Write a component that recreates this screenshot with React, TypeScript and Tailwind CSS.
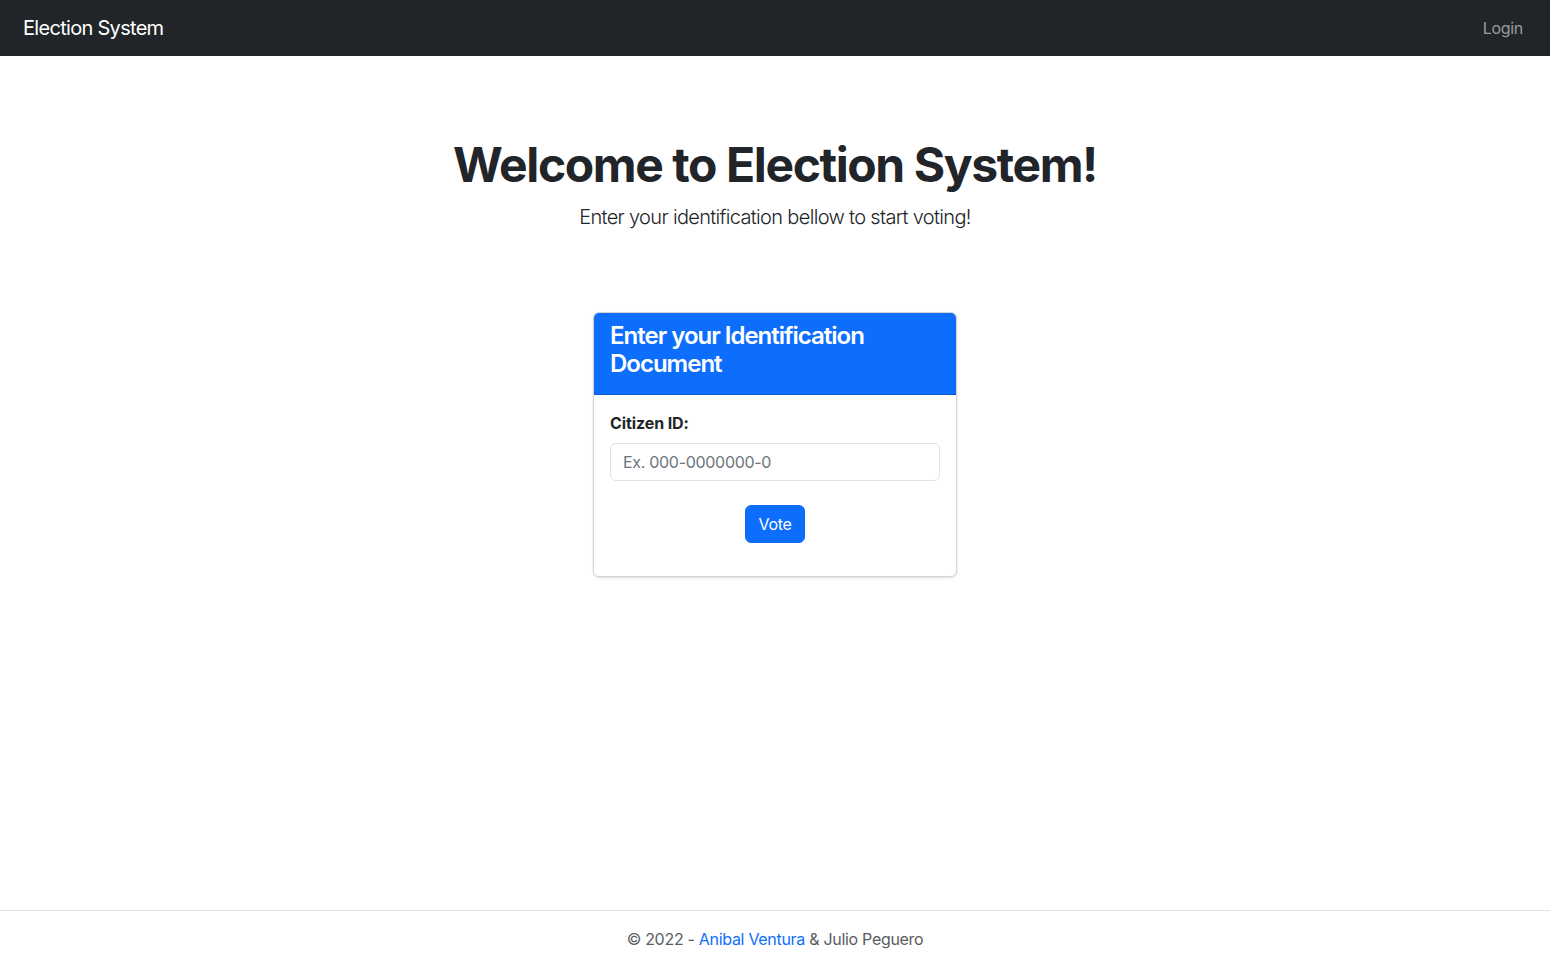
export default function App() {
  return (
    <div className="min-h-screen flex flex-col bg-white text-[#212529] font-['Inter',sans-serif] tracking-[-0.3px]">
      <nav className="h-14 bg-[#212529] flex items-center justify-between pl-[23px] pr-[27px]">
        <span className="text-white text-[20px] leading-[30px] tracking-[-0.7px]">Election System</span>
        <span className="text-[rgba(255,255,255,0.55)] text-base leading-6">Login</span>
      </nav>
      <main className="flex-1 flex flex-col items-center pt-20">
        <h1 className="text-[48px] leading-[57.6px] font-bold text-center tracking-[-1.4px]">
          Welcome to Election System!
        </h1>
        <p className="mt-2 text-[20px] leading-[30px] font-light text-center tracking-[-0.67px]">
          Enter your identification bellow to start voting!
        </p>
        <div className="mt-[80px] w-[364px] border border-[rgba(0,0,0,0.175)] rounded-md shadow-sm overflow-hidden">
          <div className="bg-[#0d6efd] px-4 pt-[9px] pb-[16px] border-b border-[rgba(0,0,0,0.175)]">
            <h3 className="text-white text-[24px] leading-[28px] font-semibold tracking-[-1px]">
              Enter your Identification Document
            </h3>
          </div>
          <div className="px-4 pt-4 pb-[33px]">
            <label className="block text-base leading-6 font-bold mb-2 tracking-[-0.1px]">Citizen ID:</label>
            <input
              className="w-full h-[38px] border border-[#dee2e6] rounded-md px-3 text-base text-[#212529] placeholder:text-[#6c757d] outline-none"
              placeholder="Ex. 000-0000000-0"
            />
            <div className="flex justify-center mt-6">
              <button className="h-[38px] px-3 bg-[#0d6efd] text-white text-base rounded-md border border-[#0d6efd]">
                Vote
              </button>
            </div>
          </div>
        </div>
      </main>
      <footer className="border-t border-[#dee2e6] pt-4 pb-[13px] text-center text-base leading-6 text-[#595c5f]">
        © 2022 - <span className="text-[#0d6efd]">Anibal Ventura</span> &amp; Julio Peguero
      </footer>
    </div>
  );
}
